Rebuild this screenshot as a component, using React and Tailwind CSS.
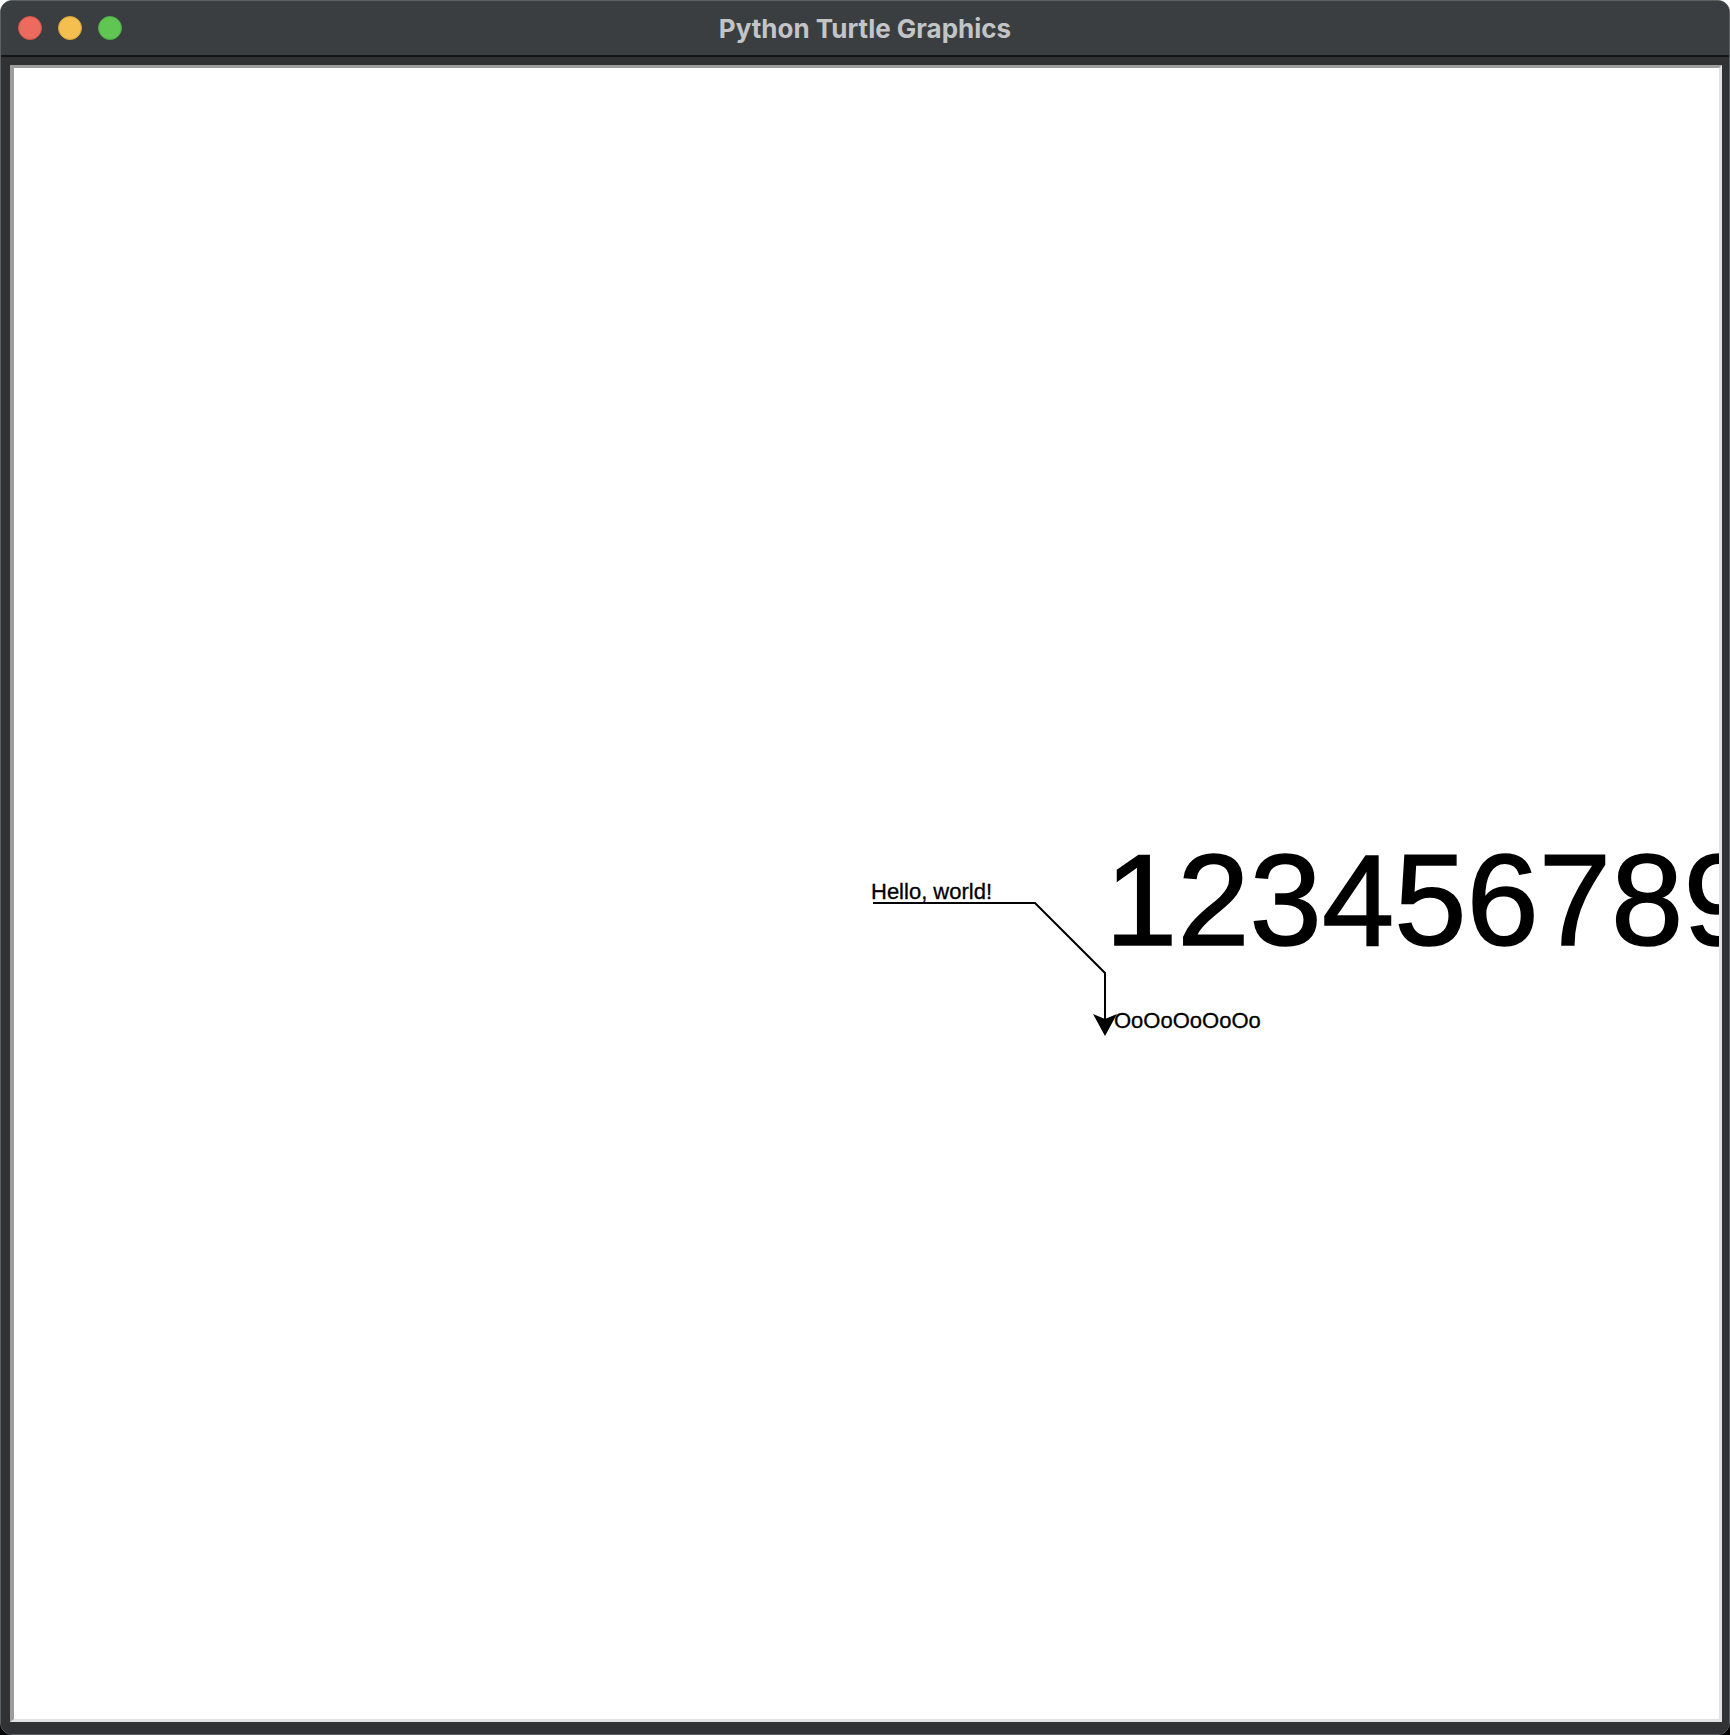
import React from 'react';

function TrafficLights() {
  return (
    <div className="flex items-center gap-4 pl-[17px]">
      <span className="w-6 h-6 rounded-full bg-[#ec6a5e] border border-[#d05548]" />
      <span className="w-6 h-6 rounded-full bg-[#f4bf4f] border border-[#d6a23b]" />
      <span className="w-6 h-6 rounded-full bg-[#61c554] border border-[#4ea843]" />
    </div>
  );
}

function TurtleCanvas() {
  return (
    <div className="flex-1 relative overflow-hidden bg-white border-t-[3px] border-l-4 border-r-[3px] border-b-[3px] border-t-[#9d9d9d] border-l-[#9d9d9d] border-r-[#e2e2e2] border-b-[#e2e2e2]">
      <svg className="absolute inset-0 w-full h-full" xmlns="http://www.w3.org/2000/svg">
        <polyline
          points="859,835 1021,835 1091,905 1091,960"
          fill="none"
          stroke="#000"
          strokeWidth="2"
        />
        <polygon points="1091,968 1079,946 1091,951 1103,946" fill="#000" />
        <text x="857" y="831" fontFamily="'Liberation Sans', Arial, sans-serif" fontSize="22" fill="#000" stroke="#000" strokeWidth="0.3">
          Hello, world!
        </text>
        <text x="1091" y="877" fontFamily="'Liberation Sans', Arial, sans-serif" fontSize="130" fill="#000" stroke="#000" strokeWidth="1.5">
          123456789
        </text>
        <text x="1100" y="960" fontFamily="'Liberation Sans', Arial, sans-serif" fontSize="22" fill="#000" stroke="#000" strokeWidth="0.3">
          OoOoOoOoOo
        </text>
      </svg>
    </div>
  );
}

export default function App() {
  return (
    <div className="w-[1730px] h-[1735px] bg-[linear-gradient(to_bottom,#ffffff_50%,#000000_50%)]">
      <div className="w-full h-full flex flex-col rounded-[12px] border border-[#5c6063] bg-[#2e2f30] overflow-hidden">
        <div className="relative h-[56px] shrink-0 bg-[#3a3e41] border-b-2 border-[#141515] flex items-center">
          <TrafficLights />
          <div className="absolute inset-0 flex items-center justify-center font-['Inter',sans-serif] font-bold text-[26px] text-[#c2c4c6]">
            Python Turtle Graphics
          </div>
        </div>
        <div className="flex-1 flex flex-col pt-[8px] pl-[9px] pr-[7px] pb-[12px] bg-[#313233]">
          <TurtleCanvas />
        </div>
      </div>
    </div>
  );
}
